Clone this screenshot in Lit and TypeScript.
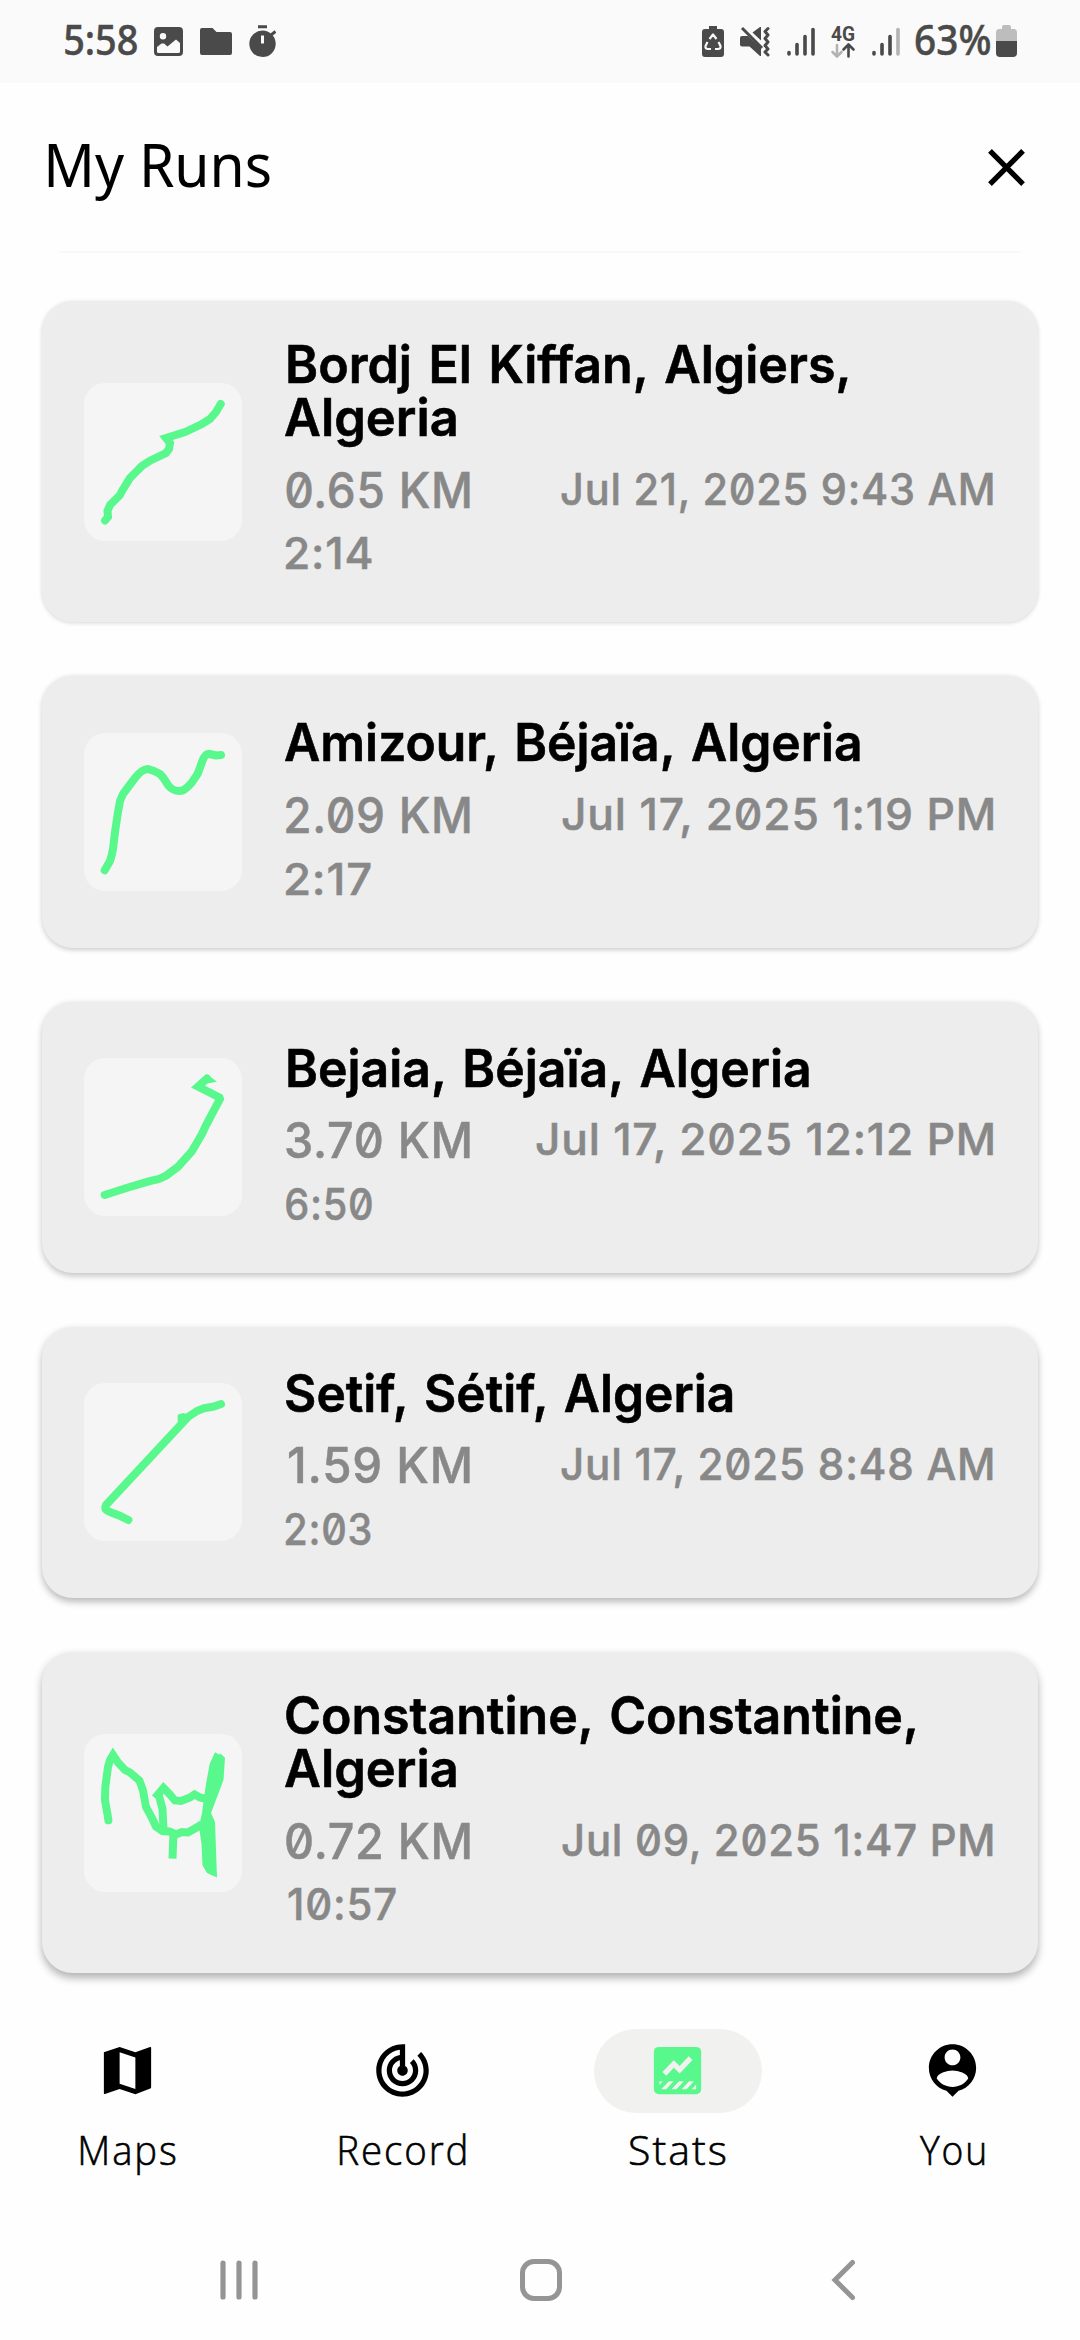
import { LitElement, html, svg, css, TemplateResult } from "lit";
import { customElement, property, query } from "lit/decorators.js";

/** One line of text whose drawn glyphs span exactly `width` pixels. */
@customElement("fit-text")
class FitText extends LitElement {
  @property() text = "";
  @property({ type: Number }) width = 100;
  @query("span") span!: HTMLSpanElement;

  static styles = css`
    :host {
      display: block;
      white-space: nowrap;
      flex: none;
    }
    span {
      display: block;
      width: max-content;
      transform-origin: 0 0;
    }
  `;

  updated() {
    const ctx = document.createElement("canvas").getContext("2d") as any;
    const cs = getComputedStyle(this.span);
    ctx.font = `${cs.fontWeight} ${cs.fontSize} ${cs.fontFamily}`;
    if (cs.letterSpacing !== "normal") ctx.letterSpacing = cs.letterSpacing;
    if (cs.wordSpacing !== "normal") ctx.wordSpacing = cs.wordSpacing;
    const m = ctx.measureText(this.text);
    const scale = this.width / (m.actualBoundingBoxLeft + m.actualBoundingBoxRight);
    this.style.width = `${this.width}px`;
    this.span.style.transform = `translateX(${m.actualBoundingBoxLeft * scale}px) scaleX(${scale})`;
  }

  render() {
    return html`<span>${this.text}</span>`;
  }
}

interface Line {
  text: string;
  x: number;
  w: number;
}

interface Run {
  title: Line[];
  distance: Line;
  date: Line;
  time: Line;
  route: TemplateResult;
}

const RUNS: Run[] = [
  {
    title: [
      { text: "Bordj El Kiffan, Algiers,", x: 3, w: 561 },
      { text: "Algeria", x: 0, w: 171 },
    ],
    distance: { text: "0.65 KM", x: 1, w: 184 },
    date: { text: "Jul 21, 2025 9:43 AM", x: 0, w: 432 },
    time: { text: "2:14", x: 1, w: 85.5 },
    route: svg`<path d="M136.700 21L132 29L126 36L118 41L101 49L82 55L86 60L85 66L82 70L66.500 77.500L58 83L46 95L38 108L36 112L26 122L23.500 128L24 134L21 137.500"/>`,
  },
  {
    title: [{ text: "Amizour, Béjaïa, Algeria", x: 0, w: 577 }],
    distance: { text: "2.09 KM", x: 1, w: 184 },
    date: { text: "Jul 17, 2025 1:19 PM", x: 0, w: 431.5 },
    time: { text: "2:17", x: 1, w: 85 },
    route: svg`<path stroke-linejoin="round" d="M20.700 137.300L26 128Q28 122 29 116L31 99L33.700 81L36 68L39 61L51 45Q58 36 64 36L70 38L76 41L79.500 45L84.700 53Q89 58 95.400 58Q101 58 107.800 49.500L113.600 41L118 29Q121 20 126 21L132 22.500L137 22"/>`,
  },
  {
    title: [{ text: "Bejaia, Béjaïa, Algeria", x: 3, w: 523 }],
    distance: { text: "3.70 KM", x: 1, w: 184 },
    date: { text: "Jul 17, 2025 12:12 PM", x: 0, w: 457.5 },
    time: { text: "6:50", x: 1, w: 85.5 },
    route: svg`<path d="M20.700 137L42.400 130L64.700 123.300L75 121L82 117.700L94 108.700L107.800 93.300L118 76L121.600 68L136 41L135.500 39.500L114 28.500L123 20.500"/><path class="solid" d="M119 20Q123 14 126 18.500L133 23.700L123 25.500L117 29Z"/>`,
  },
  {
    title: [{ text: "Setif, Sétif, Algeria", x: 1, w: 448.5 }],
    distance: { text: "1.59 KM", x: 4, w: 181 },
    date: { text: "Jul 17, 2025 8:48 AM", x: 0, w: 432 },
    time: { text: "2:03", x: 1, w: 85 },
    route: svg`<path stroke-linejoin="round" d="M137 21L130 23.500L120 25.300L113 28L104 34L22 122Q20 126 23 127.500L26 129L37 133.300L44.400 137"/><path class="solid" d="M93.700 31.700L99 30L110 33L97.500 43.500L93.700 41Z"/>`,
  },
  {
    title: [
      { text: "Constantine, Constantine,", x: 1, w: 630.5 },
      { text: "Algeria", x: 0, w: 171 },
    ],
    distance: { text: "0.72 KM", x: 1, w: 184 },
    date: { text: "Jul 09, 2025 1:47 PM", x: 0, w: 431 },
    time: { text: "10:57", x: 4, w: 107 },
    route: svg`<path d="M24.400 86.300L23.400 79.700L21 66.300L21.300 53L24 33L26 26L29 21L34 28.500L41 36L46 38.500L55.400 46.500L59 56.500L62 73L68 84L72 92.500L78.500 97L85.400 97.500L92 100.500L98 98L104 98.500L111 94.500L118 90.300"/>
      <path stroke-linecap="butt" d="M71 64L79.500 54L85.400 60L91 66.500L97 67L106 63.500L110.500 60.500L116 63.500L123 65M75 62L78.500 75L79.500 95M89.500 99L88.500 124.700"/>
      <path class="solid" d="M131 18.300L135 20.500L136.500 19.500L141 23.700L139.500 46L127 79L131 88L133 143.500Q127 141 123 139L118.500 131.300L117.500 110L115 93L118 79L122 49.700L125.700 29.700Z"/>`,
  },
];

@customElement("run-card")
class RunCard extends LitElement {
  @property({ attribute: false }) run!: Run;

  static styles = css`
    :host {
      display: flex;
      align-items: center;
      box-sizing: border-box;
      width: 996px;
      border-radius: 31px;
      background: #ededed;
      padding: 0 45px 0 42px;
      font-family: Inter, "Liberation Sans", sans-serif;
    }
    .thumb {
      display: block;
      flex: none;
      width: 158px;
      height: 158px;
      border-radius: 21px;
      background: #f5f5f5;
      margin-right: 42.5px;
    }
    .thumb path {
      fill: none;
      stroke: #59f88c;
      stroke-width: 8px;
      stroke-linecap: round;
    }
    .thumb path[stroke-linecap="butt"] {
      stroke-linecap: butt;
    }
    .thumb .solid {
      fill: #59f88c;
      stroke: none;
    }
    .body {
      flex: 1;
      align-self: stretch;
      display: flex;
      flex-direction: column;
      justify-content: flex-end;
      padding-bottom: 41px;
    }
    .title {
      font-size: 52px;
      line-height: 53px;
      font-weight: 600;
      -webkit-text-stroke: 0.6px currentColor;
      word-spacing: 4px;
      color: #000;
    }
    .row {
      display: flex;
      align-items: flex-start;
      justify-content: space-between;
      margin: 15.4px 0 5.7px;
      height: 60px;
      color: #888;
    }
    .distance,
    .date,
    .time {
      font-weight: 500;
      font-feature-settings: "zero" 1;
      letter-spacing: 0.8px;
      -webkit-text-stroke: 0.5px currentColor;
      color: #888;
    }
    .distance {
      font-size: 49.500px;
      line-height: 60px;
    }
    .date,
    .time {
      font-size: 44px;
      line-height: 56px;
    }
    .date {
      margin-top: 1px;
    }
  `;

  private line(l: Line, cls: string) {
    return html`<fit-text class=${cls} style="margin-left:${l.x}px" .text=${l.text} .width=${l.w}></fit-text>`;
  }

  render() {
    const r = this.run;
    return html`
      <svg class="thumb" viewBox="0 0 158 158">${r.route}</svg>
      <div class="body">
        ${r.title.map((t) => this.line(t, "title"))}
        <div class="row">${this.line(r.distance, "distance")}${this.line(r.date, "date")}</div>
        ${this.line(r.time, "time")}
      </div>
    `;
  }
}

const signal = (lastBar: string) => html`<svg width="28" height="32" viewBox="0 0 28 32">
  <g stroke-width="3.600" stroke-linecap="round" stroke="#4a4a4a">
    <path d="M2 27.500V29M10 19.500V29M18 11.500V29" />
    <path d="M26 4.500V29" stroke=${lastBar} />
  </g>
</svg>`;

const NAV = [
  {
    label: "Maps",
    w: 94,
    icon: svg`<path fill-rule="evenodd" d="M3 5L9 3L15 5.050L20.600 3.050Q21 2.900 21 3.400V18.400Q21 18.800 20.700 18.900L15 21L9 19L3.400 20.950Q3 21.100 3 20.700ZM9 5.050V17.050L15 19.050V7.050Z"/>`,
  },
  {
    label: "Record",
    w: 125.5,
    icon: svg`<path d="M19.070 4.930l-1.410 1.410C19.100 7.790 20 9.790 20 12c0 4.420-3.580 8-8 8s-8-3.580-8-8c0-4.080 3.050-7.440 7-7.930v2.020C8.160 6.570 6 9.030 6 12c0 3.310 2.690 6 6 6s6-2.690 6-6c0-1.660-.67-3.160-1.760-4.240l-1.410 1.410C15.550 9.900 16 10.900 16 12c0 2.210-1.790 4-4 4s-4-1.790-4-4c0-1.860 1.280-3.410 3-3.860v2.140c-.6.350-1 .98-1 1.720 0 1.100.9 2 2 2s2-.9 2-2c0-.74-.4-1.380-1-1.720V2h-1C6.480 2 2 6.480 2 12s4.480 10 10 10 10-4.480 10-10c0-2.760-1.120-5.260-2.930-7.070z"/>`,
  },
  {
    label: "Stats",
    w: 95,
    active: true,
    icon: svg`<rect x="3" y="3" width="18" height="18" rx="1.900" fill="#59f88c"/>
      <path d="M7 13.300L10.600 9.500L12.800 11.700L17 7.300" fill="none" stroke="#f1f1f0" stroke-width="2"/>
      <path fill="#f1f1f0" d="M5.100 16.100H6.400L5.100 17.500ZM8.700 16.100H10.500L7.700 19.100H5.800ZM12.600 16.100H14.400L11.600 19.100H9.700ZM16.400 16.100H18.300L15.500 19.100H13.600ZM19.100 17.300V19.100H17.400Z"/>`,
  },
  {
    label: "You",
    w: 64.5,
    icon: svg`<path d="M12 2c-4.970 0-9 4.030-9 9 0 4.170 2.840 7.670 6.690 8.690L12 22l2.310-2.310C18.160 18.670 21 15.170 21 11c0-4.970-4.030-9-9-9zm0 2c1.660 0 3 1.340 3 3s-1.340 3-3 3-3-1.340-3-3 1.340-3 3-3zm0 14.300c-2.500 0-4.710-1.280-6-3.220.03-1.990 4-3.080 6-3.080 1.990 0 5.970 1.090 6 3.080-1.290 1.940-3.500 3.220-6 3.220z"/>`,
  },
];

@customElement("app-root")
class AppRoot extends LitElement {
  static styles = css`
    :host {
      display: flex;
      flex-direction: column;
      width: 1080px;
      height: 2340px;
      overflow: hidden;
      background: #fefefe;
      font-family: "Noto Sans", "Open Sans", sans-serif;
      color: #000;
    }
    svg {
      display: block;
      flex: none;
    }
    .status {
      flex: none;
      display: flex;
      box-sizing: border-box;
      height: 83px;
      background: #fafafa;
      padding: 25px 63px 0 65px;
      align-items: flex-start;
      justify-content: space-between;
      color: #4a4a4a;
    }
    .group {
      display: flex;
      height: 32px;
      align-items: center;
    }
    .left {
      gap: 17px;
    }
    .right {
      gap: 16.500px;
    }
    .clock {
      font-size: 41px;
      line-height: 32px;
      font-weight: 500;
      margin-top: -4px;
      -webkit-text-stroke: 0.5px currentColor;
    }
    .network {
      overflow: visible;
    }
    .battery {
      margin-left: -11px;
    }
    .header {
      flex: none;
      display: flex;
      justify-content: space-between;
      align-items: center;
      height: 168px;
      padding: 0 42.500px 0 48px;
    }
    .heading {
      font-size: 61px;
      line-height: 80px;
      margin-bottom: 6px;
    }
    .divider {
      flex: none;
      height: 2px;
      margin: 0 60px;
      background: #f8f8f8;
    }
    .list {
      flex: none;
      display: grid;
      justify-content: center;
      grid-template-rows: 321.250px 271.250px 271.250px 271.250px 321.250px;
      row-gap: 54px;
      margin-top: 48px;
    }
    .tabs {
      flex: none;
      display: flex;
      gap: 107px;
      padding-left: 43.600px;
      margin-top: 55.500px;
    }
    .tab {
      width: 168px;
      display: flex;
      flex-direction: column;
      align-items: center;
    }
    .pill {
      display: flex;
      align-items: center;
      justify-content: center;
      width: 168px;
      height: 84px;
      border-radius: 42px;
    }
    .active {
      background: #f1f1f0;
    }
    .label {
      font-family: "Open Sans", "Noto Sans", sans-serif;
      font-weight: 300;
      -webkit-text-stroke: 0.6px currentColor;
      font-size: 40.500px;
      line-height: 50px;
      letter-spacing: 2px;
      margin-top: 12px;
    }
    .system {
      flex: none;
      display: flex;
      align-items: center;
      margin-top: 84px;
      padding-left: 218px;
    }
    .home {
      margin: 0 269px 0 260px;
    }
  `;

  render() {
    return html`
      <div class="status">
        <div class="group left">
          <fit-text class="clock" .text=${"5:58"} .width=${72}></fit-text>
          <svg width="29" height="32" viewBox="0 0 29 32">
            <path
              fill="#4a4a4a"
              fill-rule="evenodd"
              d="M4 2H25Q29 2 29 6V27Q29 31 25 31H4Q0 31 0 27V6Q0 2 4 2ZM3 22V26.500Q3 28 4.500 28H24.500Q26 28 26 26.500V18L22 14.500L13.500 21.500L10 18.500H7.500ZM9 8A3.200 3.200 0 1 0 9 14.400A3.200 3.200 0 1 0 9 8Z"
            />
          </svg>
          <svg width="32" height="32" viewBox="0 0 32 32">
            <path fill="#4a4a4a" d="M2 3H12.500L16.500 7H30Q32 7 32 9V28Q32 30 30 30H2Q0 30 0 28V5Q0 3 2 3Z" />
          </svg>
          <svg width="27" height="32" viewBox="0 0 27 32">
            <path stroke="#4a4a4a" stroke-width="3" d="M9 1.800H18M22 10L26.500 6.500" />
            <circle cx="13.500" cy="18.800" r="13.200" fill="#4a4a4a" />
            <path stroke="#fafafa" stroke-width="3" d="M13.500 10.500V18.500" />
          </svg>
        </div>
        <div class="group right">
          <svg width="22" height="32" viewBox="0 0 22 32">
            <path fill="#4a4a4a" d="M7 1H15V4H19Q22 4 22 7V29Q22 32 19 32H3Q0 32 0 29V7Q0 4 3 4H7Z" />
            <path
              fill="none"
              stroke="#fafafa"
              stroke-width="2.200"
              stroke-linejoin="round"
              d="M7.500 14L11 9.500L14.500 14M16.500 17L18.500 21Q19 24 16 24H13M9 24H6Q3 24 3.500 21L5.500 17"
            />
          </svg>
          <svg width="30" height="32" viewBox="0 0 30 32">
            <path fill="#4a4a4a" d="M0 13Q0 11 2 11H8L21 23V31H20L9.500 21.500H2Q0 21.500 0 19.500ZM12.500 7.500L20 2H21V15.500Z" />
            <path stroke="#4a4a4a" stroke-width="3" d="M2 3L22 23" />
            <path
              fill="none"
              stroke="#4a4a4a"
              stroke-width="3"
              stroke-linecap="round"
              stroke-linejoin="round"
              d="M28 3.500L25 6.500L28 10L25 13.500L28 17L25 20.500L28 24L25 27L28 30"
            />
          </svg>
          ${signal("#4a4a4a")}
          <svg class="network" width="24" height="34" viewBox="0 0 24 34">
            <text x="0" y="17" font-family="Roboto" font-weight="700" font-size="20" fill="#4a4a4a" textLength="24" lengthAdjust="spacingAndGlyphs">4G</text>
            <g fill="none" stroke-width="2.600" stroke-linecap="round" stroke-linejoin="round">
              <path stroke="#b3b3b3" d="M6 21V32M1.500 28L6 32.500L10.500 28" />
              <path stroke="#4a4a4a" d="M17.500 32.500V21M12.500 25.500L17.500 20.500L22.500 25.500" />
            </g>
          </svg>
          ${signal("#b3b3b3")}
          <fit-text class="clock" .text=${"63%"} .width=${74.5}></fit-text>
          <svg class="battery" width="21" height="32" viewBox="0 0 21 32">
            <path fill="#bdbdbd" d="M6 2Q6 0 8 0H13Q15 0 15 2V4H18Q21 4 21 8V16H0V8Q0 4 3 4H6Z" />
            <path fill="#4a4a4a" d="M0 16H21V28Q21 32 17 32H4Q0 32 0 28Z" />
          </svg>
        </div>
      </div>

      <div class="header">
        <fit-text class="heading" .text=${"My Runs"} .width=${222}></fit-text>
        <svg width="63" height="63" viewBox="0 0 24 24">
          <path d="M5.700 5.700L18.300 18.300M18.300 5.700L5.700 18.300" stroke="#000" stroke-width="2" />
        </svg>
      </div>
      <div class="divider"></div>

      <div class="list">
        ${RUNS.map(
          (run, i) =>
            html`<run-card .run=${run} style="box-shadow:0 ${1 + i * 0.8}px ${4 + i}px rgba(0,0,0,${0.16 + i * 0.035})"></run-card>`,
        )}
      </div>

      <div class="tabs">
        ${NAV.map(
          (n) => html`<div class="tab">
            <div class="pill ${n.active ? "active" : ""}">
              <svg width="63" height="63" viewBox="0 0 24 24">${n.icon}</svg>
            </div>
            <fit-text class="label" .text=${n.label} .width=${n.w}></fit-text>
          </div>`,
        )}
      </div>

      <div class="system">
        <svg width="42" height="42" viewBox="0 0 42 42">
          <path stroke="#959595" stroke-width="5.200" stroke-linecap="round" d="M5 4V38M21 4V38M37 4V38" />
        </svg>
        <svg class="home" width="42" height="42" viewBox="0 0 42 42">
          <rect x="2.500" y="2.500" width="37" height="37" rx="11.500" fill="none" stroke="#959595" stroke-width="5" />
        </svg>
        <svg width="26" height="42" viewBox="0 0 26 42">
          <path fill="none" stroke="#959595" stroke-width="5" stroke-linecap="round" d="M21.500 3.500L4 21L21.500 38.500" />
        </svg>
      </div>
    `;
  }
}
